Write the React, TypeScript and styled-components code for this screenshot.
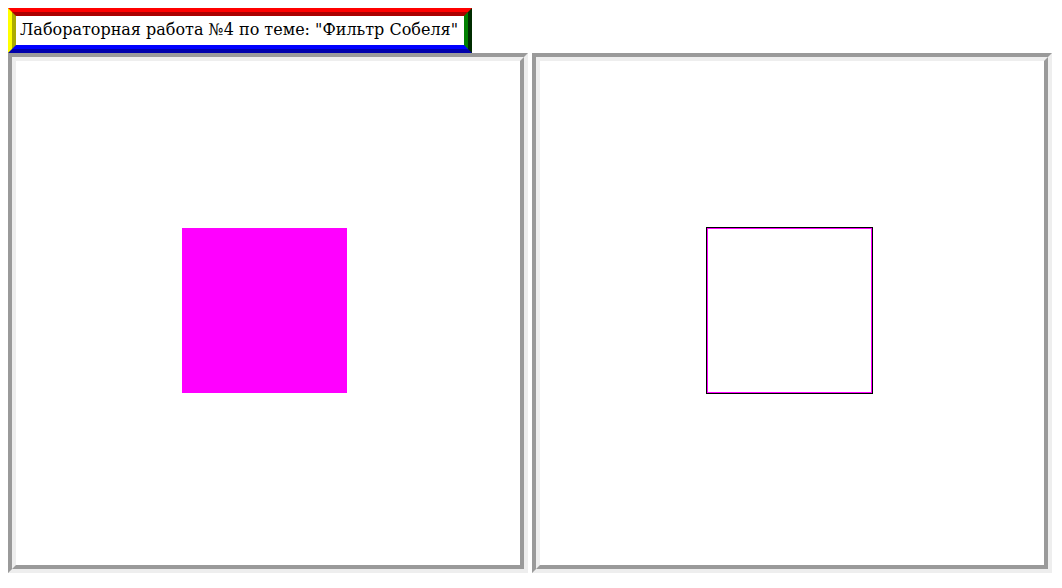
import React from "react";
import styled, { createGlobalStyle } from "styled-components";

const Global = createGlobalStyle`
  html, body { margin: 0; padding: 0; background: #fff; }
  body { margin: 8px; font-family: "DejaVu Serif", serif; font-size: 16px; color: #000; }
`;

const Title = styled.div`
  display: inline-block;
  border: 8px ridge;
  border-color: red green blue yellow;
  padding: 4px 6px 6px 4px;
  line-height: 19px;
  font-family: "DejaVu Serif", serif;
  font-size: 16px;
  white-space: nowrap;
`;

const Row = styled.div`
  display: flex;
  gap: 4px;
`;

const Frame = styled.div`
  width: 504px;
  height: 504px;
  border: 8px groove;
  background: #fff;
  flex: none;
`;

const Drawing = styled.svg`
  display: block;
  width: 504px;
  height: 504px;
`;

export default function App() {
  return (
    <>
      <Global />
      <Title>Лабораторная работа №4 по теме: "Фильтр Собеля"</Title>
      <Row>
        <Frame>
          <Drawing viewBox="0 0 504 504">
            <rect x="166" y="167" width="165" height="165" fill="#ff00ff" />
          </Drawing>
        </Frame>
        <Frame>
          <Drawing viewBox="0 0 504 504">
            <rect x="166" y="166" width="167" height="167" fill="#000" />
            <rect x="167" y="167" width="165" height="165" fill="#ff00ff" />
            <rect x="168" y="168" width="163" height="163" fill="#fff" />
          </Drawing>
        </Frame>
      </Row>
    </>
  );
}
